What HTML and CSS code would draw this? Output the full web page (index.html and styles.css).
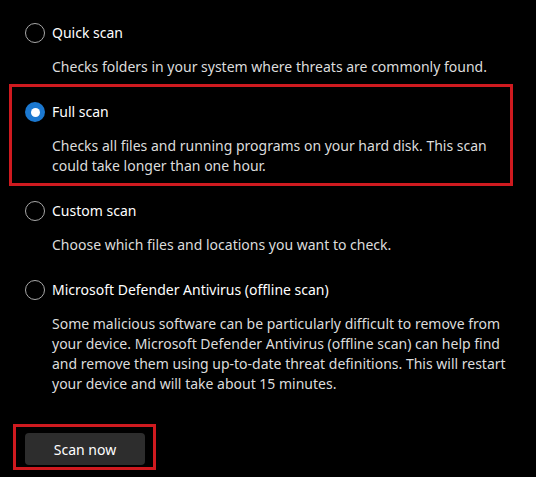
FILE: index.html
```html
<!DOCTYPE html>
<html lang="en">
<head>
  <meta charset="UTF-8">
  <meta name="viewport" content="width=device-width, initial-scale=1.0">
  <title>Scan options</title>
  <link rel="stylesheet" href="styles.css">
</head>
<body>
  <div class="scan-options">
    <div class="option">
      <div class="option-row">
        <span class="radio"></span>
        <span class="option-label">Quick scan</span>
      </div>
      <p class="option-desc">Checks folders in your system where threats are commonly found.</p>
    </div>

    <div class="option highlight">
      <div class="option-row">
        <span class="radio checked"></span>
        <span class="option-label">Full scan</span>
      </div>
      <p class="option-desc">Checks all files and running programs on your hard disk. This scan<br>could take longer than one hour.</p>
    </div>

    <div class="option after-highlight">
      <div class="option-row">
        <span class="radio"></span>
        <span class="option-label">Custom scan</span>
      </div>
      <p class="option-desc">Choose which files and locations you want to check.</p>
    </div>

    <div class="option">
      <div class="option-row">
        <span class="radio"></span>
        <span class="option-label">Microsoft Defender Antivirus (offline scan)</span>
      </div>
      <p class="option-desc">Some malicious software can be particularly difficult to remove from<br>your device. Microsoft Defender Antivirus (offline scan) can help find<br>and remove them using up-to-date threat definitions. This will restart<br>your device and will take about 15 minutes.</p>
    </div>

    <div class="scan-action">
      <button class="scan-button">Scan now</button>
    </div>
  </div>
</body>
</html>
```

FILE: styles.css
```css
body {
  margin: 0;
  background: #000;
  font-family: "Noto Sans", "Open Sans", sans-serif;
  font-size: 14px;
  color: #fff;
}
.scan-options {
  padding: 23px 0 0 25px;
}
.option {
  margin-top: 25px;
}
.option:first-child {
  margin-top: 0;
}
.option-row {
  display: flex;
  align-items: center;
  gap: 7px;
  height: 20px;
}
.radio {
  box-sizing: border-box;
  width: 20px;
  height: 20px;
  border: 1.5px solid #a8a8a8;
  border-radius: 50%;
  flex-shrink: 0;
}
.radio.checked {
  border: none;
  background: #1b78d0;
  display: flex;
  align-items: center;
  justify-content: center;
}
.radio.checked::after {
  content: "";
  width: 9px;
  height: 9px;
  border-radius: 50%;
  background: #fff;
}
.option-label {
  font-size: 14px;
  line-height: 20px;
  color: #fff;
}
.option-desc {
  margin: 14px 0 0 27px;
  line-height: 20px;
  color: #dcdcdc;
}
.highlight {
  box-sizing: border-box;
  width: 504px;
  margin: 7px 0 0 -16px;
  padding: 15px 0 7px 13px;
  border: 3px solid #cf1a1f;
}
.after-highlight {
  margin-top: 15px;
}
.scan-action {
  display: inline-block;
  margin: 30px 0 0 -12px;
  padding: 6px 8px 2px 9px;
  border: 3px solid #cf1a1f;
}
.scan-button {
  display: block;
  width: 120px;
  height: 32px;
  background: #2d2d2d;
  color: #fff;
  border: none;
  border-radius: 4px;
  font-family: inherit;
  font-size: 14px;
}
```
